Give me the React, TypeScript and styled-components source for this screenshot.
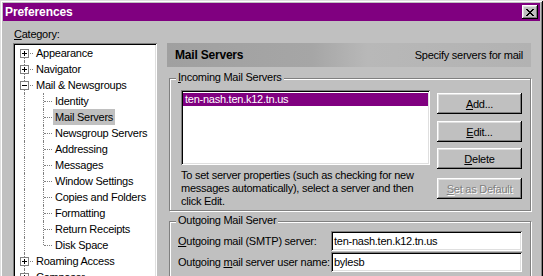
import React from 'react';
import styled, { createGlobalStyle, css } from 'styled-components';

const GlobalStyle = createGlobalStyle`
  html, body {
    margin: 0;
    padding: 0;
    overflow: hidden;
    background: #c0c0c0;
  }
  body {
    font-family: "Liberation Sans", Arial, sans-serif;
    font-size: 11px;
    letter-spacing: -0.25px;
    color: #000;
  }
`;

const raised = css`
  box-shadow: inset -1px -1px #000, inset 1px 1px #fff, inset -2px -2px #808080, inset 2px 2px #dfdfdf;
`;

const sunken = css`
  box-shadow: inset 1px 1px #808080, inset -1px -1px #fff, inset 2px 2px #000, inset -2px -2px #dfdfdf;
`;

type TreeNode = {
  label: string;
  depth: 0 | 1;
  expander?: 'plus' | 'minus';
  selected?: boolean;
  last?: boolean;
};

const tree: TreeNode[] = [
  { label: 'Appearance', depth: 0, expander: 'plus' },
  { label: 'Navigator', depth: 0, expander: 'plus' },
  { label: 'Mail & Newsgroups', depth: 0, expander: 'minus' },
  { label: 'Identity', depth: 1 },
  { label: 'Mail Servers', depth: 1, selected: true },
  { label: 'Newsgroup Servers', depth: 1 },
  { label: 'Addressing', depth: 1 },
  { label: 'Messages', depth: 1 },
  { label: 'Window Settings', depth: 1 },
  { label: 'Copies and Folders', depth: 1 },
  { label: 'Formatting', depth: 1 },
  { label: 'Return Receipts', depth: 1 },
  { label: 'Disk Space', depth: 1, last: true },
  { label: 'Roaming Access', depth: 0, expander: 'plus' },
  { label: 'Composer', depth: 0, expander: 'plus' },
  { label: 'Offline', depth: 0, expander: 'plus' },
  { label: 'Advanced', depth: 0, expander: 'plus' },
];

const ExpandIcon = ({ kind }: { kind: 'plus' | 'minus' }) => (
  <ExpandSvg width="9" height="9" viewBox="0 0 9 9" shapeRendering="crispEdges">
    <rect x="0.5" y="0.5" width="8" height="8" fill="#fff" stroke="#808080" />
    <path d="M2 4h5v1H2z" fill="#000" />
    {kind === 'plus' && <path d="M4 2h1v5H4z" fill="#000" />}
  </ExpandSvg>
);

const CloseIcon = () => (
  <svg width="8" height="7" viewBox="0 0 8 7" shapeRendering="crispEdges">
    <path
      fill="#000"
      d="M0 0h2v1H0z M6 0h2v1H6z M1 1h2v1H1z M5 1h2v1H5z M2 2h4v1H2z M3 3h2v1H3z M2 4h4v1H2z M1 5h2v1H1z M5 5h2v1H5z M0 6h2v1H0z M6 6h2v1H6z"
    />
  </svg>
);

export default function App() {
  return (
    <>
      <GlobalStyle />
      <Window>
        <TitleBar>
          <Title>Preferences</Title>
          <CloseButton>
            <CloseIcon />
          </CloseButton>
        </TitleBar>
        <Body>
          <LeftColumn>
            <FieldLabel>
              <u>C</u>ategory:
            </FieldLabel>
            <TreeBox>
              {tree.map((node, i) => (
                <TreeRow key={node.label}>
                  <Guide $v={i === 0 ? 'bottom' : 'full'} $branch={node.depth === 0}>
                    {node.expander && <ExpandIcon kind={node.expander} />}
                  </Guide>
                  {node.depth === 1 && <Guide $v={node.last ? 'top' : 'full'} $branch />}
                  <ItemLabel $selected={node.selected}>{node.label}</ItemLabel>
                </TreeRow>
              ))}
            </TreeBox>
          </LeftColumn>

          <RightColumn>
            <PageHeader>
              <PageTitle>Mail Servers</PageTitle>
              <span>Specify servers for mail</span>
            </PageHeader>

            <Group $gap={11}>
              <GroupCaption>
                <u>I</u>ncoming Mail Servers
              </GroupCaption>
              <ListRow>
                <ListColumn>
                  <ListBox>
                    <ListItem $selected>ten-nash.ten.k12.tn.us</ListItem>
                  </ListBox>
                  <HelpText>
                    To set server properties (such as checking for new
                    <br />
                    messages automatically), select a server and then
                    <br />
                    click Edit.
                  </HelpText>
                </ListColumn>
                <ButtonStack>
                  <Button $space={0}>
                    <u>A</u>dd...
                  </Button>
                  <Button $space={7}>
                    <u>E</u>dit...
                  </Button>
                  <Button $space={6}>
                    <u>D</u>elete
                  </Button>
                  <Button $space={9} disabled>
                    <u>S</u>et as Default
                  </Button>
                </ButtonStack>
              </ListRow>
            </Group>

            <Group $gap={10} $open>
              <GroupCaption>Outgoing Mail Server</GroupCaption>
              <FieldRow>
                <span>
                  <u>O</u>utgoing mail (SMTP) server:
                </span>
                <TextBox>ten-nash.ten.k12.tn.us</TextBox>
              </FieldRow>
              <FieldRow>
                <span>
                  Outgoing <u>m</u>ail server user name:
                </span>
                <TextBox>bylesb</TextBox>
              </FieldRow>
            </Group>
          </RightColumn>
        </Body>
      </Window>
    </>
  );
}

const Window = styled.div`
  box-sizing: border-box;
  width: 543px;
  height: 420px;
  padding: 3px;
  background: #c0c0c0;
  box-shadow: inset 1px 1px #dfdfdf, inset -1px -1px #000, inset 2px 2px #fff, inset -2px -2px #808080;
`;

const TitleBar = styled.div`
  display: flex;
  align-items: center;
  justify-content: space-between;
  height: 18px;
  padding: 0 2px;
  background: #800080;
`;

const Title = styled.span`
  color: #fff;
  font-weight: bold;
  font-size: 12px;
  letter-spacing: -0.1px;
`;

const CloseButton = styled.div`
  display: flex;
  align-items: center;
  justify-content: center;
  width: 16px;
  height: 14px;
  background: #c0c0c0;
  ${raised};
`;

const Body = styled.div`
  display: flex;
  gap: 10px;
  padding: 7px 0 0 10px;
`;

const LeftColumn = styled.div`
  display: flex;
  flex-direction: column;
  width: 144px;
`;

const FieldLabel = styled.div`
  line-height: 13px;
  padding-left: 1px;
  margin-bottom: 2px;
`;

const TreeBox = styled.div`
  height: 340px;
  padding: 2px;
  background: #fff;
  overflow: hidden;
  ${sunken};
`;

const TreeRow = styled.div`
  display: flex;
  align-items: center;
  height: 16px;
`;

const Guide = styled.span<{ $v: 'full' | 'top' | 'bottom'; $branch?: boolean }>`
  position: relative;
  flex: 0 0 19px;
  height: 16px;

  &::before {
    content: '';
    position: absolute;
    left: 9px;
    top: ${(p) => (p.$v === 'bottom' ? '8px' : '0')};
    bottom: ${(p) => (p.$v === 'top' ? '8px' : '0')};
    border-left: 1px dotted #808080;
  }

  &::after {
    content: '';
    display: ${(p) => (p.$branch ? 'block' : 'none')};
    position: absolute;
    left: 10px;
    top: 8px;
    width: 8px;
    border-top: 1px dotted #808080;
  }
`;

const ExpandSvg = styled.svg`
  position: absolute;
  left: 5px;
  top: 4px;
  z-index: 1;
`;

const ItemLabel = styled.span<{ $selected?: boolean }>`
  padding: 0 2px;
  line-height: 16px;
  white-space: nowrap;
  background: ${(p) => (p.$selected ? '#c0c0c0' : 'transparent')};
`;

const RightColumn = styled.div`
  display: flex;
  flex-direction: column;
  width: 364px;
  margin-top: 15px;
`;

const PageHeader = styled.div`
  display: flex;
  align-items: center;
  justify-content: space-between;
  height: 24px;
  padding: 0 8px;
  background: linear-gradient(to right, #a0a0a0 0%, #a6a6a6 40%, #b8b8b8 55%, #b2b2b2 100%);
`;

const PageTitle = styled.span`
  font-weight: bold;
  font-size: 12px;
  letter-spacing: -0.2px;
`;

const Group = styled.div<{ $gap: number; $open?: boolean }>`
  position: relative;
  margin: ${(p) => p.$gap}px 0 0 2px;
  padding: ${(p) => (p.$open ? '9px 8px 40px 8px' : '11px 8px 2px 11px')};
  border: 1px solid #808080;
  box-shadow: inset 1px 1px #fff, 1px 1px #fff;
`;

const GroupCaption = styled.span`
  position: absolute;
  top: -8px;
  left: 6px;
  padding: 0 2px;
  line-height: 13px;
  background: #c0c0c0;
`;

const ListRow = styled.div`
  display: flex;
  align-items: flex-start;
  gap: 7px;
`;

const ListColumn = styled.div`
  display: flex;
  flex-direction: column;
  width: 249px;
`;

const ListBox = styled.div`
  box-sizing: border-box;
  height: 75px;
  padding: 3px 2px 2px 2px;
  background: #fff;
  ${sunken};
`;

const ListItem = styled.div<{ $selected?: boolean }>`
  height: 13px;
  line-height: 13px;
  padding-left: 2px;
  background: ${(p) => (p.$selected ? '#800080' : 'transparent')};
  color: ${(p) => (p.$selected ? '#fff' : '#000')};
`;

const ButtonStack = styled.div`
  display: flex;
  flex-direction: column;
  margin-top: 3px;
`;

const Button = styled.button<{ $space: number }>`
  width: 85px;
  height: 21px;
  margin-top: ${(p) => p.$space}px;
  padding: 0;
  border: none;
  background: #c0c0c0;
  font: inherit;
  letter-spacing: inherit;
  color: #000;
  ${raised};

  &:disabled {
    color: #808080;
    text-shadow: 1px 1px 0 #fff;
  }
`;

const HelpText = styled.div`
  margin-top: 4px;
  line-height: 13px;
  white-space: nowrap;
`;

const FieldRow = styled.div`
  display: flex;
  align-items: center;
  justify-content: space-between;
  height: 20px;

  & + & {
    margin-top: 1px;
  }
`;

const TextBox = styled.div`
  box-sizing: border-box;
  width: 191px;
  height: 20px;
  padding: 0 3px;
  line-height: 20px;
  background: #fff;
  ${sunken};
`;
